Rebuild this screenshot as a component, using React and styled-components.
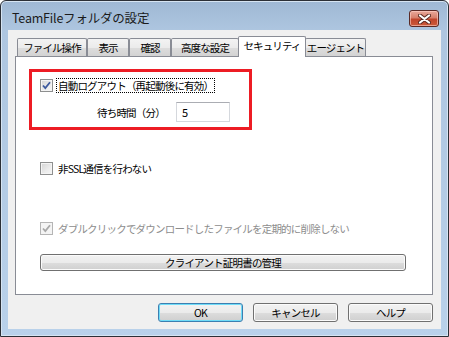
import React from 'react';
import styled, { createGlobalStyle } from 'styled-components';

const GlobalStyle = createGlobalStyle`
    html, body {
        margin: 0;
        padding: 0;
        background: #ffffff;
    }
    body {
        font-family: 'Noto Sans CJK JP', 'Noto Sans', sans-serif;
        font-size: 10.5px;
        color: #000;
    }
`;

const TABS = [
    { label: 'ファイル操作', w: 70 },
    { label: '表示', w: 42 },
    { label: '確認', w: 42 },
    { label: '高度な設定', w: 68 },
    { label: 'セキュリティ', w: 68, active: true },
    { label: 'エージェント', w: 61 },
];

function CheckMark({ disabled }) {
    return (
        <svg width="9" height="9" viewBox="0 0 9 9">
            <path d="M1 4.5 L3.3 7 L8 1.2" fill="none"
                stroke={disabled ? '#a8a8a8' : '#3d5a9e'} strokeWidth="1.8" />
        </svg>
    );
}

function CloseGlyph() {
    return (
        <svg width="13" height="10" viewBox="0 0 13 10">
            <path d="M2 1.5 L11 8.5 M11 1.5 L2 8.5" stroke="#5a2a22" strokeWidth="4" strokeLinecap="round" />
            <path d="M2 1.5 L11 8.5 M11 1.5 L2 8.5" stroke="#ffffff" strokeWidth="2.2" strokeLinecap="round" />
        </svg>
    );
}

function Check({ checked, disabled, focused, children }) {
    return (
        <CheckRow $disabled={disabled}>
            <CheckBox $disabled={disabled}>{checked && <CheckMark disabled={disabled} />}</CheckBox>
            <CheckLabel $focused={focused}>{children}</CheckLabel>
        </CheckRow>
    );
}

export default function App() {
    return (
        <>
            <GlobalStyle />
            <Window>
                <TitleBar>
                    <Title>TeamFileフォルダの設定</Title>
                    <CloseButton><CloseGlyph /></CloseButton>
                </TitleBar>
                <Client>
                    <TabRow>
                        {TABS.map((t) => (
                            <Tab key={t.label} $w={t.w} $active={t.active}>{t.label}</Tab>
                        ))}
                    </TabRow>
                    <Panel>
                        <RedBox>
                            <Check checked focused>自動ログアウト（再起動後に有効）</Check>
                            <WaitRow>
                                <span>待ち時間（分）</span>
                                <NumberInput>5</NumberInput>
                            </WaitRow>
                        </RedBox>
                        <Spaced $top={31}>
                            <Check>非SSL通信を行わない</Check>
                        </Spaced>
                        <Spaced $top={45}>
                            <Check checked disabled>ダブルクリックでダウンロードしたファイルを定期的に削除しない</Check>
                        </Spaced>
                        <WideButton>クライアント証明書の管理</WideButton>
                    </Panel>
                    <ButtonBar>
                        <DialogButton $default>OK</DialogButton>
                        <DialogButton>キャンセル</DialogButton>
                        <DialogButton>ヘルプ</DialogButton>
                    </ButtonBar>
                </Client>
            </Window>
        </>
    );
}

const Window = styled.div`
    box-sizing: border-box;
    width: 449px;
    height: 337px;
    border: 1px solid #2b2f36;
    border-radius: 6px 6px 0 0;
    background: linear-gradient(180deg, #9fb8d4 0px, #aec6e0 30px, #b9d1ea 100%);
    padding: 0 7px 7px 7px;
    display: flex;
    flex-direction: column;
    box-shadow: inset 0 0 0 1px #d6e4f2;
`;

const TitleBar = styled.div`
    height: 29px;
    display: flex;
    align-items: flex-start;
    justify-content: space-between;
    padding: 0 2px 0 4px;
`;

const Title = styled.div`
    margin-top: 9px;
    font-size: 12.5px;
    line-height: 16px;
    color: #1b1b1b;
    letter-spacing: -0.2px;
`;

const CloseButton = styled.div`
    box-sizing: border-box;
    margin-top: 9px;
    width: 30px;
    height: 17px;
    border: 1px solid #5a2a26;
    border-radius: 3px;
    background: linear-gradient(180deg, #e9a99b 0%, #d7806c 45%, #c0452c 55%, #cc5a3a 100%);
    box-shadow: inset 0 0 0 1px rgba(255, 210, 200, 0.6);
    display: flex;
    align-items: center;
    justify-content: center;
`;

const Client = styled.div`
    flex: 1;
    background: #f0f0f0;
    padding: 6px 8px 0 7px;
    display: flex;
    flex-direction: column;
`;

const TabRow = styled.div`
    display: flex;
    align-items: flex-end;
    height: 21px;
    padding-left: 2px;
    margin-bottom: -1px;
    position: relative;
    z-index: 1;
`;

const Tab = styled.div`
    box-sizing: border-box;
    width: ${(p) => p.$w}px;
    height: ${(p) => (p.$active ? 21 : 18)}px;
    margin: ${(p) => (p.$active ? '0 -1px 0 -1px' : '0 0 1px 0')};
    border: 1px solid #898c95;
    border-bottom: none;
    border-radius: 2px 2px 0 0;
    background: ${(p) => (p.$active
        ? '#ffffff'
        : 'linear-gradient(180deg, #f3f3f3 0%, #ebebeb 50%, #dddddd 51%, #d3d3d3 100%)')};
    position: relative;
    z-index: ${(p) => (p.$active ? 2 : 1)};
    display: flex;
    align-items: ${(p) => (p.$active ? 'flex-start' : 'center')};
    justify-content: center;
    padding-top: ${(p) => (p.$active ? 2 : 0)}px;
    font-size: 10.5px;
    line-height: 14px;
    letter-spacing: -0.9px;
    white-space: nowrap;
`;

const Panel = styled.div`
    box-sizing: border-box;
    width: 418px;
    height: 239px;
    background: #ffffff;
    border: 1px solid #898c95;
    display: flex;
    flex-direction: column;
    align-items: flex-start;
    padding: 12px 0 0 13px;
`;

const RedBox = styled.div`
    box-sizing: border-box;
    width: 223px;
    height: 61px;
    border: 3px solid #ed1c24;
    padding: 6px 0 0 8px;
    display: flex;
    flex-direction: column;
`;

const CheckRow = styled.div`
    display: flex;
    align-items: center;
    gap: 3px;
    height: 15px;
    color: ${(p) => (p.$disabled ? '#8d8d8d' : '#000')};
    white-space: nowrap;
`;

const CheckBox = styled.div`
    box-sizing: border-box;
    width: 13px;
    height: 13px;
    border: 1px solid ${(p) => (p.$disabled ? '#b5b5b5' : '#8e8f8f')};
    background: ${(p) => (p.$disabled
        ? '#f4f4f4'
        : 'linear-gradient(135deg, #d4d4d4 0%, #ececec 60%, #f6f6f6 100%)')};
    box-shadow: inset 0 0 0 1px #f4f4f4;
    display: flex;
    align-items: center;
    justify-content: center;
`;

const CheckLabel = styled.span`
    font-size: 10.5px;
    line-height: 13px;
    letter-spacing: -0.8px;
    padding: 0 1px;
    border: 1px dotted ${(p) => (p.$focused ? '#000' : 'transparent')};
`;

const WaitRow = styled.div`
    display: flex;
    align-items: center;
    gap: 11px;
    margin: 9px 0 0 57px;
    font-size: 10.5px;
    letter-spacing: -0.8px;
    white-space: nowrap;
`;

const NumberInput = styled.div`
    box-sizing: border-box;
    width: 54px;
    height: 20px;
    border: 1px solid #d5d8dd;
    border-top-color: #abadb3;
    background: #fff;
    padding: 2px 0 0 5px;
    font-size: 11px;
    line-height: 14px;
`;

const Spaced = styled.div`
    margin: ${(p) => p.$top}px 0 0 11px;
`;

const buttonFace = `
    box-sizing: border-box;
    border: 1px solid #707070;
    border-radius: 3px;
    background: linear-gradient(180deg, #f2f2f2 0%, #ebebeb 50%, #dddddd 51%, #cfcfcf 100%);
    display: flex;
    align-items: center;
    justify-content: center;
    font-size: 10.5px;
    letter-spacing: -0.8px;
    color: #000;
`;

const WideButton = styled.div`
    ${buttonFace}
    width: 366px;
    height: 17px;
    margin: 18px 0 0 11px;
    box-shadow: inset 0 0 0 1px #fbfbfb;
`;

const ButtonBar = styled.div`
    display: flex;
    justify-content: flex-end;
    gap: 10px;
    margin-top: 8px;
`;

const DialogButton = styled.div`
    ${buttonFace}
    width: 85px;
    height: 19px;
    border-color: ${(p) => (p.$default ? '#3c7fb1' : '#707070')};
    box-shadow: ${(p) => (p.$default ? 'inset 0 0 0 1px #6fdcf8' : 'inset 0 0 0 1px #fbfbfb')};
`;
